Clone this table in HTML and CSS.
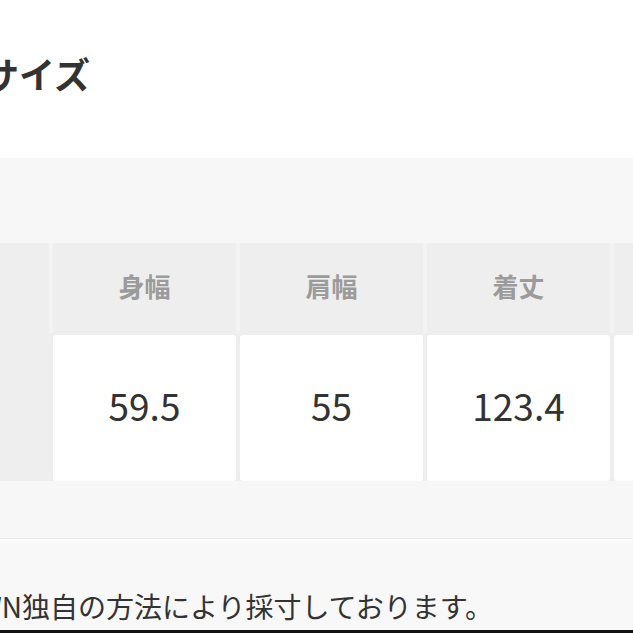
FILE: index.html
```html
<!DOCTYPE html>
<html lang="ja">
<head>
<meta charset="utf-8">
<link rel="stylesheet" href="styles.css">
</head>
<body>
<div class="page">
  <section class="title-area">
    <h2 class="title">サイズ</h2>
  </section>
  <section class="size-area">
    <div class="caption"></div>
    <div class="row head">
      <div class="cell label"></div>
      <div class="cell">身幅</div>
      <div class="cell">肩幅</div>
      <div class="cell">着丈</div>
      <div class="cell">袖丈</div>
    </div>
    <div class="row data">
      <div class="cell label"></div>
      <div class="cell">59.5</div>
      <div class="cell">55</div>
      <div class="cell">123.4</div>
      <div class="cell">60</div>
    </div>
    <div class="spacer"></div>
  </section>
  <section class="note-area">
    <p class="note"><span class="pre">ZOZOTOWN</span>独自の方法により採寸しております。</p>
  </section>
  <div class="bottom-bar"></div>
</div>
</body>
</html>
```
FILE: styles.css
```css
html, body {
  margin: 0;
  padding: 0;
}
body {
  width: 633px;
  height: 633px;
  overflow: hidden;
  background: #fff;
  font-family: "Noto Sans CJK JP", "Noto Sans", sans-serif;
  color: #333;
}
.page {
  display: flex;
  flex-direction: column;
  height: 633px;
}
.title-area {
  height: 158px;
  background: #fff;
  box-sizing: border-box;
  padding-top: 55px;
}
.title {
  margin: 0 0 0 -17px;
  font-size: 36px;
  line-height: 36px;
  font-weight: 700;
  color: #333;
  white-space: nowrap;
}
.size-area {
  background: #f7f7f7;
  display: flex;
  flex-direction: column;
}
.caption {
  height: 85px;
}
.row {
  display: grid;
  grid-template-columns: 49px 183px 183px 183px 183px;
  column-gap: 4px;
}
.row.head {
  height: 90px;
  background: #f3f3f3;
}
.row.head .cell {
  background: #eeeeee;
  color: #9b9b9b;
  font-size: 26px;
  font-weight: 700;
  display: flex;
  align-items: center;
  justify-content: center;
  padding-bottom: 6px;
}
.row.data {
  height: 148px;
  background: #eeeeee;
  padding-top: 2px;
  box-sizing: border-box;
}
.row.data .cell {
  background: #fff;
  border-radius: 3px;
  font-size: 37px;
  color: #333;
  display: flex;
  align-items: center;
  justify-content: center;
  padding-bottom: 6px;
}
.row.data .cell.label {
  background: #eeeeee;
  border-radius: 0;
}
.spacer {
  height: 57px;
  border-bottom: 1px solid #e8e8e8;
  box-shadow: 0 2px 0 #fdfdfd;
}
.note-area {
  flex: 1;
  background: #f8f8f8;
  display: flex;
  align-items: flex-end;
  padding-bottom: 8px;
  margin-top: 2px;
}
.note {
  margin: 0;
  font-size: 28px;
  line-height: 32px;
  color: #333;
  white-space: nowrap;
  display: flex;
}
.pre {
  display: inline-flex;
  justify-content: flex-end;
  width: 22px;
  white-space: nowrap;
}
.bottom-bar {
  height: 3px;
  background: #111;
}
```
